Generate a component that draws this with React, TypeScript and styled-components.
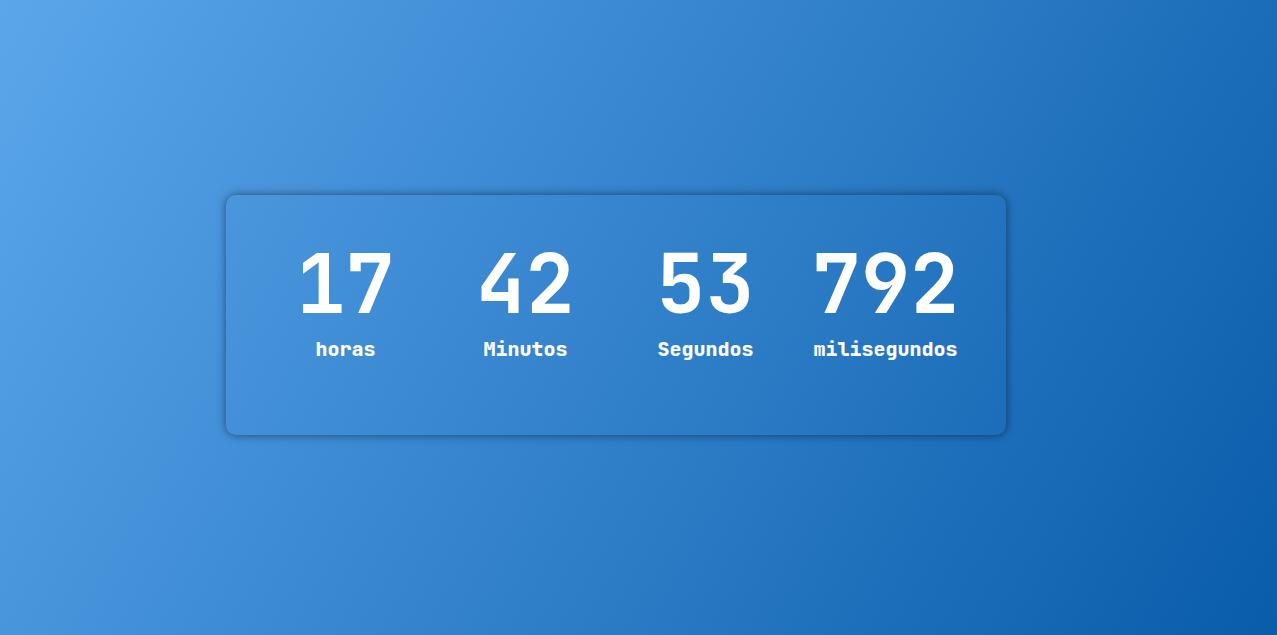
import styled, { createGlobalStyle } from "styled-components";

const GlobalStyle = createGlobalStyle`
  * { box-sizing: border-box; }
  body {
    margin: 0;
    font-family: "JetBrains Mono", "Liberation Mono", monospace;
    color: #fff;
  }
`;

const Page = styled.main`
  min-height: 100vh;
  display: flex;
  align-items: center;
  justify-content: center;
  padding: 0 46px 6px 0;
  background: linear-gradient(120deg, #5ba6eb, #095caa);
`;

const Clock = styled.section`
  width: 780px;
  max-width: 100%;
  min-height: 240px;
  padding: 40px 30px;
  display: flex;
  align-items: flex-start;
  border-radius: 10px;
  box-shadow: 0 0 10px rgba(0, 0, 0, 0.5);
`;

const Unit = styled.div`
  flex: 1;
  display: flex;
  flex-direction: column;
  align-items: center;
`;

const Value = styled.span`
  font-size: 82px;
  line-height: 98px;
  font-weight: 700;
`;

const Label = styled.span`
  font-size: 20px;
  line-height: 32px;
  font-weight: 800;
`;

const units = [
  { value: "17", label: "horas" },
  { value: "42", label: "Minutos" },
  { value: "53", label: "Segundos" },
  { value: "792", label: "milisegundos" },
];

export default function App() {
  return (
    <>
      <GlobalStyle />
      <Page>
        <Clock>
          {units.map((unit) => (
            <Unit key={unit.label}>
              <Value>{unit.value}</Value>
              <Label>{unit.label}</Label>
            </Unit>
          ))}
        </Clock>
      </Page>
    </>
  );
}
